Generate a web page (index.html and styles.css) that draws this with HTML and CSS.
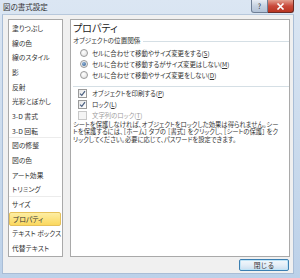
FILE: index.html
```html
<!DOCTYPE html>
<html lang="ja">
<head>
    <meta charset="UTF-8">
    <title>図の書式設定</title>
    <link rel="stylesheet" href="styles.css">
</head>
<body>
    <div class="window">
        <!-- タイトルバー -->
        <div class="titlebar">
            <span class="title">図の書式設定</span>
            <div class="caption-buttons">
                <span class="cap-btn help">?</span>
                <span class="cap-btn close">
                    <svg width="9" height="7" viewBox="0 0 9 7"><path d="M1.5 0.5 L7.5 6.5 M7.5 0.5 L1.5 6.5" stroke="#fff" stroke-width="1.6"/></svg>
                </span>
            </div>
        </div>

        <div class="client">
            <div class="main">
                <ul class="nav">
                    <li>塗りつぶし</li>
                    <li>線の色</li>
                    <li>線のスタイル</li>
                    <li>影</li>
                    <li>反射</li>
                    <li>光彩とぼかし</li>
                    <li>3-D 書式</li>
                    <li class="group-end">3-D 回転</li>
                    <li>図の修整</li>
                    <li>図の色</li>
                    <li>アート効果</li>
                    <li class="group-end">トリミング</li>
                    <li>サイズ</li>
                    <li class="selected">プロパティ</li>
                    <li>テキスト ボックス</li>
                    <li>代替テキスト</li>
                </ul>

                <div class="panel">
                    <div class="panel-title">プロパティ</div>
                    <div class="group-heading"><span>オブジェクトの位置関係</span><i class="rule"></i></div>

                    <div class="options radios">
                        <div class="option"><span class="radio"></span>セルに合わせて移動やサイズ変更をする(<u>S</u>)</div>
                        <div class="option"><span class="radio on"></span>セルに合わせて移動するがサイズ変更はしない(<u>M</u>)</div>
                        <div class="option"><span class="radio"></span>セルに合わせて移動やサイズ変更をしない(<u>D</u>)</div>
                    </div>

                    <div class="separator"></div>

                    <div class="options checks">
                        <div class="option"><span class="check on"><svg width="7" height="7" viewBox="0 0 7 7"><path d="M1 3.6 L2.8 5.4 L6 1.2" fill="none" stroke="#4a5f80" stroke-width="1.2"/></svg></span>オブジェクトを印刷する(<u>P</u>)</div>
                        <div class="option"><span class="check on"><svg width="7" height="7" viewBox="0 0 7 7"><path d="M1 3.6 L2.8 5.4 L6 1.2" fill="none" stroke="#4a5f80" stroke-width="1.2"/></svg></span>ロック(<u>L</u>)</div>
                        <div class="option disabled"><span class="check"></span>文字列のロック(<u>T</u>)</div>
                    </div>

                    <p class="note">シートを保護しなければ、オブジェクトをロックした効果は得られません。シー<br>トを保護するには、［ホーム］ タブの ［書式］ をクリックし、［シートの保護］ をク<br>リックしてください。必要に応じて、パスワードを設定できます。</p>
                </div>
            </div>

            <div class="footer">
                <button class="button">閉じる</button>
            </div>
        </div>
    </div>
</body>
</html>
```

FILE: styles.css
```css
body {
    margin: 0;
    font-family: "Noto Sans CJK JP", "Noto Sans", sans-serif;
    font-feature-settings: "palt";
    color: #333;
    background: #c6d8ec;
}

.window {
    width: 300px;
    height: 278px;
    display: flex;
    flex-direction: column;
    background: linear-gradient(180deg, #dbe6f3, #c8d9ec 60%, #bcd1e9);
    overflow: hidden;
}

/* タイトルバー */
.titlebar {
    height: 14px;
    display: flex;
    align-items: flex-start;
    justify-content: space-between;
}

.title {
    font-size: 7.5px;
    line-height: 13px;
    padding-left: 3px;
    color: #333;
}

.caption-buttons {
    display: flex;
    margin-right: 6px;
}

.cap-btn {
    height: 12px;
    display: flex;
    align-items: center;
    justify-content: center;
    border: 1px solid #6f7f95;
    border-top: none;
}

.cap-btn.help {
    width: 15px;
    font-size: 7px;
    color: #333;
    border-radius: 0 0 0 3px;
    background: linear-gradient(180deg, #e9eef5, #c6d2e1 50%, #b3c3d7);
}

.cap-btn.close {
    width: 25px;
    border-left: none;
    border-color: #6b2a24;
    border-radius: 0 0 3px 0;
    background: linear-gradient(180deg, #e3a08f, #c9493b 50%, #b8341f);
}

/* クライアント領域 */
.client {
    flex: 1;
    margin: 0 6px 4px 2px;
    padding: 5px 3px 0 6px;
    background: #f0f0f0;
    border: 1px solid #a9bdd6;
    border-top-color: #b7c8dc;
    display: flex;
    flex-direction: column;
}

.main {
    height: 238px;
    display: flex;
    gap: 7px;
    margin-top: -1px;
    margin-left: -1px;
}

.nav {
    width: 52px;
    margin: 0;
    padding: 1px 1px 0 0;
    list-style: none;
    background: #fff;
    border: 1px solid #a9a9a9;
}

.nav li {
    height: 14.67px;
    line-height: 14.67px;
    padding-left: 3px;
    font-size: 6.8px;
    white-space: nowrap;
    box-sizing: border-box;
}

.nav li.group-end {
    border-bottom: 1px solid #ececec;
}

.nav li.selected {
    background: linear-gradient(180deg, #fdeea4, #fbd85e);
    border: 1px solid #e6c15a;
    border-radius: 2px;
    line-height: 12.67px;
}

.panel {
    flex: 1;
    background: #fff;
    border: 1px solid #a9a9a9;
    padding: 2px 0 0 2px;
}

.panel-title {
    font-size: 10px;
    line-height: 12px;
    color: #222;
}

.group-heading {
    display: flex;
    align-items: center;
    margin-top: 2px;
    font-size: 6.6px;
    line-height: 9px;
    white-space: nowrap;
}

.group-heading .rule {
    flex: 1;
    height: 1px;
    margin: 2px 0 0 3px;
    background: #d5dfe5;
}

.options {
    display: flex;
    flex-direction: column;
}

.radios {
    padding-top: 2.5px;
}

.option {
    height: 11px;
    display: flex;
    align-items: center;
    font-size: 6.4px;
    white-space: nowrap;
}

.option u {
    text-decoration-thickness: 0.5px;
}

.radio {
    width: 6px;
    height: 6px;
    margin: 0 4px 0 7px;
    border: 1px solid #9a9a9a;
    border-radius: 50%;
    background: radial-gradient(circle at 40% 35%, #ffffff, #dcdcdc);
    position: relative;
}

.radio.on::after {
    content: "";
    position: absolute;
    left: 1px;
    top: 1px;
    width: 4px;
    height: 4px;
    border-radius: 50%;
    background: radial-gradient(circle at 40% 35%, #8fb0d6, #2a5a8c);
}

.separator {
    height: 1px;
    margin: 5.5px 0 0.5px 0;
    background: #d5dfe5;
}

.check {
    width: 7px;
    height: 7px;
    margin: 0 5px 0 5px;
    border: 1px solid #9a9a9a;
    background: linear-gradient(135deg, #e6e6e6, #ffffff);
    display: flex;
}

.option.disabled {
    color: #a0a0a0;
}

.option.disabled .check {
    border-color: #c8c8c8;
    background: #f4f4f4;
}

.note {
    margin: 0;
    font-size: 6.3px;
    line-height: 7.6px;
    white-space: nowrap;
}

.footer {
    display: flex;
    justify-content: flex-end;
    margin-top: 2px;
    padding-right: 1px;
}

.button {
    width: 50px;
    height: 12px;
    padding: 0;
    font-family: inherit;
    font-size: 6.8px;
    line-height: 10px;
    color: #333;
    border: 1px solid #3c7fb1;
    border-radius: 2px;
    background: linear-gradient(180deg, #f2f8fc, #e4eef7 50%, #c9def0);
    box-shadow: inset 0 0 0 1px #bfe4f7;
}
```
